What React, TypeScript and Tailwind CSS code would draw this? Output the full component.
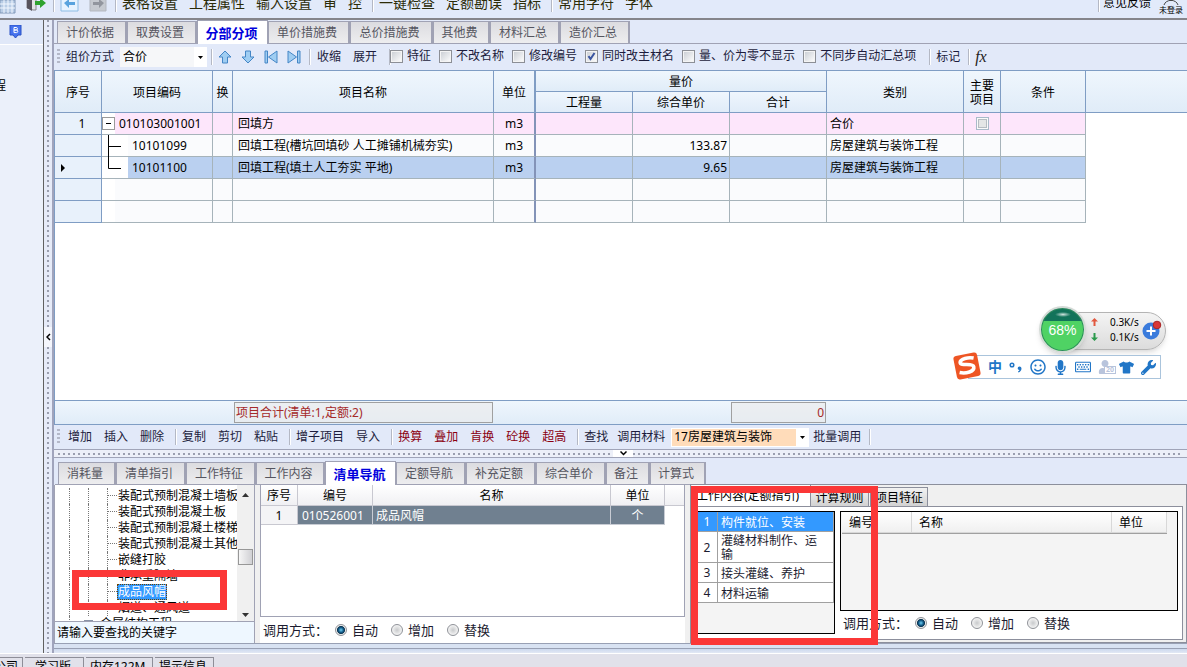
import React from 'react'
import clsx from 'clsx'
import { FaMicrophone, FaRegKeyboard, FaRegSmile, FaTshirt, FaUser, FaWrench } from 'react-icons/fa'

const topMenus = [
    ['表格设置', '工程属性', '输入设置', '审', '控'],
    ['一键检查', '定额勘误', '指标'],
    ['常用字符', '字体'],
]

const mainTabs = [
    { name: '计价依据', width: 'w-[70px]' },
    { name: '取费设置', width: 'w-[70px]' },
    { name: '分部分项', width: 'w-[71px]' },
    { name: '单价措施费', width: 'w-[82px]' },
    { name: '总价措施费', width: 'w-[83px]' },
    { name: '其他费', width: 'w-[57px]' },
    { name: '材料汇总', width: 'w-[70px]' },
    { name: '造价汇总', width: 'w-[70px]' },
]

const detailTabs = [
    { name: '消耗量', width: 'w-[58px]' },
    { name: '清单指引', width: 'w-[70px]' },
    { name: '工作特征', width: 'w-[70px]' },
    { name: '工作内容', width: 'w-[69px]' },
    { name: '清单导航', width: 'w-[71px]' },
    { name: '定额导航', width: 'w-[70px]' },
    { name: '补充定额', width: 'w-[70px]' },
    { name: '综合单价', width: 'w-[70px]' },
    { name: '备注', width: 'w-[44px]' },
    { name: '计算式', width: 'w-[56px]' },
]

const checks = [
    { label: '特征', checked: false },
    { label: '不改名称', checked: false },
    { label: '修改编号', checked: false },
    { label: '同时改主材名', checked: true },
    { label: '量、价为零不显示', checked: false },
    { label: '不同步自动汇总项', checked: false },
]

const editGroups = [
    { items: ['增加', '插入', '删除'], color: 'text-[#1c1c3c]' },
    { items: ['复制', '剪切', '粘贴'], color: 'text-[#1c1c3c]' },
    { items: ['增子项目', '导入'], color: 'text-[#1c1c3c]' },
    { items: ['换算', '叠加', '肯换', '砼换', '超高'], color: 'text-[#8b0010]' },
    { items: ['查找', '调用材料'], color: 'text-[#1c1c3c]' },
]

interface QuotaRow {
    no?: string
    code?: string
    name?: string
    unit?: string
    price?: string
    category?: string
    kind: 'parent' | 'child' | 'last' | 'empty'
}

const quotaRows: QuotaRow[] = [
    { no: '1', code: '010103001001', name: '回填方', unit: 'm3', category: '合价', kind: 'parent' },
    { code: '10101099', name: '回填工程(槽坑回填砂 人工摊铺机械夯实)', unit: 'm3', price: '133.87', category: '房屋建筑与装饰工程', kind: 'child' },
    { code: '10101100', name: '回填工程(填土人工夯实 平地)', unit: 'm3', price: '9.65', category: '房屋建筑与装饰工程', kind: 'last' },
    { kind: 'empty' },
    { kind: 'empty' },
]

const treeItems = [
    '装配式预制混凝土墙板',
    '装配式预制混凝土板',
    '装配式预制混凝土楼梯',
    '装配式预制混凝土其他',
    '嵌缝打胶',
    '非承重隔墙',
    '成品风帽',
    '烟道、通风道',
]

const workItems = ['构件就位、安装', '灌缝材料制作、运输', '接头灌缝、养护', '材料运输']

function Separator({ className }: { className?: string }) {
    return <span className={clsx('h-4 w-px shrink-0 bg-[#b4b8c4] shadow-[1px_0_0_#ffffff]', className)} />
}

function Grip() {
    return <span className="h-4 w-[3px] shrink-0 bg-[repeating-linear-gradient(180deg,#b4b8c8_0px,#b4b8c8_2px,transparent_2px,transparent_4px)]" />
}

interface TabsProps {
    tabs: { name: string; width: string }[]
    active: string
    onChange: (name: string) => void
}

function Tabs({ tabs, active, onChange }: TabsProps) {
    return (
        <div role="tablist" className="flex h-6 shrink-0 items-end border-b border-[#a0a2b4] pl-[3px]">
            {tabs.map((tab) => (
                <button
                    key={tab.name}
                    type="button"
                    role="tab"
                    aria-selected={tab.name === active}
                    onClick={() => onChange(tab.name)}
                    className={clsx(
                        'shrink-0 whitespace-nowrap border border-b-0 border-[#a0a2b4] text-center',
                        tab.width,
                        tab.name === active
                            ? '-mb-px h-6 bg-white pr-[2px] text-[13px] leading-5 font-bold text-[#0000dd]'
                            : 'h-[22px] border-r-2 bg-linear-to-b from-[#dcdce0] to-[#ededef] pr-[3px] text-xs leading-[22px] text-[#55555f]',
                    )}
                >
                    {tab.name}
                </button>
            ))}
        </div>
    )
}

function Check({ label, defaultChecked }: { label: string; defaultChecked: boolean }) {
    return (
        <label className="flex shrink-0 items-center gap-1 whitespace-nowrap">
            <span className="relative size-[13px]">
                <input
                    type="checkbox"
                    defaultChecked={defaultChecked}
                    className="peer block size-[13px] appearance-none border border-[#8c8f96] bg-linear-to-br from-[#c8ccd2] to-white shadow-[inset_0_0_0_1px_#f4f4f4]"
                />
                <svg viewBox="0 0 13 13" className="pointer-events-none absolute inset-0 hidden peer-checked:block">
                    <path d="M3.5 6.2 5.5 9 9.5 3" fill="none" stroke="#3a55a0" strokeWidth="2" />
                </svg>
            </span>
            {label}
        </label>
    )
}

function CallMode({ name }: { name: string }) {
    return (
        <div role="radiogroup" aria-label="调用方式" className="flex items-center text-[13px] leading-4 text-[#1c1c30]">
            <span className="w-[72px] whitespace-nowrap">调用方式：</span>
            {['自动', '增加', '替换'].map((mode, i) => (
                <label key={mode} className="flex w-14 items-center gap-[5px] whitespace-nowrap">
                    <input
                        type="radio"
                        name={name}
                        defaultChecked={i === 0}
                        className="size-3 appearance-none rounded-full border border-[#8f9298] bg-[radial-gradient(circle,#c8cacc_0%,#f4f4f4_70%)] checked:bg-[radial-gradient(circle,#6fd0f4_0%,#125a88_35%,#0d3550_52%,#eeeeee_62%)]"
                    />
                    {mode}
                </label>
            ))}
        </div>
    )
}

function ArrowIcon({ path, name }: { path: string; name: string }) {
    return (
        <button type="button" aria-label={name} className="shrink-0">
            <svg width="14" height="14" viewBox="0 0 14 14">
                <path d={path} fill="#9fcdf2" stroke="#4486c6" strokeWidth="1" strokeLinejoin="round" />
            </svg>
        </button>
    )
}

function TopBar() {
    return (
        <header className="flex h-5 shrink-0 items-end border-b-2 border-[#85858b] bg-[#e2eafa] pb-[7px] text-sm leading-4 text-[#2c2c08]">
            <svg width="16" height="14" viewBox="0 0 16 14" className="-mb-[3px] shrink-0">
                <path d="M0 0h15v13H0z" fill="#b9cde6" stroke="#8097b8" />
                <path d="M0 4h15M0 8h15M4 0v13M8 0v13M12 0v13" stroke="#f2f7ff" />
            </svg>
            <svg width="20" height="14" viewBox="0 0 20 14" className="-mb-px ml-[10px] shrink-0">
                <path d="M1 0h9v12H7l-6-2z" fill="#e3e3e6" stroke="#85838a" />
                <path d="M1 0h5v13l-5-3z" fill="#57535c" />
                <path d="M9 3h5V0l6 5-6 5V7H9z" fill="#2fa32f" />
            </svg>
            <Separator className="-mb-px ml-[7px]" />
            <svg width="20" height="14" viewBox="0 0 20 14" className="-mb-[2px] ml-[6px] shrink-0">
                <path d="M1 0v12h17V0" fill="#e6f3ff" stroke="#8dbce4" />
                <path d="M4 4 9 0v3h6v3H9v3z" fill="#58a3de" />
            </svg>
            <svg width="18" height="14" viewBox="0 0 18 14" className="-mb-[2px] ml-[9px] shrink-0">
                <path d="M1 0v12h16V0" fill="#c6cad0" stroke="#b3b7bf" />
                <path d="M15 4 10 0v3H4v3h6v3z" fill="#92969e" />
            </svg>
            {topMenus.map((group, i) => (
                <React.Fragment key={i}>
                    <Separator className={i === 0 ? '-mb-px ml-[8px]' : '-mb-px ml-[10px]'} />
                    <nav className="ml-[6px] flex shrink-0 gap-[11px] whitespace-nowrap">
                        {group.map((item) => (
                            <button key={item} type="button">
                                {item}
                            </button>
                        ))}
                    </nav>
                </React.Fragment>
            ))}
            <Separator className="-mb-px ml-auto" />
            <button type="button" className="ml-1 shrink-0 text-xs leading-4 text-black">
                意见反馈
            </button>
            <button type="button" className="ml-2 mr-1 -mb-1 flex shrink-0 flex-col items-center text-[8px] leading-[10px] text-black">
                <svg width="16" height="8" viewBox="0 0 16 8">
                    <path d="M1 8c1-3 3-4 7-5 4 1 6 2 7 5M6 2l2 2 2-2" fill="none" stroke="#444" />
                </svg>
                未登录
            </button>
        </header>
    )
}

function MainToolbar() {
    return (
        <div className="flex h-[26px] shrink-0 items-center bg-[#e2e9f9] pl-[3px] text-xs leading-4 text-[#1c1c3c]">
            <Grip />
            <label htmlFor="pricing" className="ml-[6px] shrink-0">
                组价方式
            </label>
            <div className="relative ml-[6px] h-5 w-[87px] shrink-0">
                <select id="pricing" className="h-5 w-full appearance-none bg-[#f6f7f9] pl-[3px] text-black">
                    <option>合价</option>
                </select>
                <span className="pointer-events-none absolute inset-y-0 right-0 flex w-[13px] items-center justify-center bg-white">
                    <svg width="5" height="3" viewBox="0 0 5 3">
                        <path d="M0 0h5L2.500 3z" />
                    </svg>
                </span>
            </div>
            <Separator className="ml-1" />
            <div className="ml-[6px] flex shrink-0 gap-[9px]">
                <ArrowIcon name="上移" path="M7 1l6 6H9.500v6h-5V7H1z" />
                <ArrowIcon name="下移" path="M4.500 1h5v6H13l-6 6-6-6h3.500z" />
                <ArrowIcon name="首项" path="M1 1h2.500v12H1zM13 1v12L4.500 7z" />
                <ArrowIcon name="末项" path="M10.500 1H13v12h-2.500zM1 1v12l8.500-6z" />
            </div>
            <Separator className="ml-[8px]" />
            <div className="ml-[7px] flex shrink-0 gap-3">
                <button type="button">收缩</button>
                <button type="button">展开</button>
            </div>
            <Separator className="ml-3" />
            <div className="flex shrink-0 gap-2 pb-[2px]">
                {checks.map((item) => (
                    <Check key={item.label} label={item.label} defaultChecked={item.checked} />
                ))}
            </div>
            <Separator className="ml-[13px]" />
            <button type="button" className="ml-[6px] shrink-0">
                标记
            </button>
            <Separator className="ml-[8px]" />
            <button type="button" aria-label="函数" className="ml-[6px] shrink-0">
                <span className="pr-1 font-['Liberation_Serif',serif] text-base font-medium text-[#222222] italic">fx</span>
            </button>
        </div>
    )
}

const headCell = 'border-b border-r border-[#7f9dc4] bg-linear-to-b from-[#eff6fd] to-[#e0ecf8] p-0 pt-[2px] font-normal'
const bodyCell = 'border-b border-r border-[#a6b3ba] p-0'

function QuotaTable() {
    return (
        <table className="w-full table-fixed border-separate border-spacing-0 text-xs leading-[14px] text-black">
            <colgroup>
                <col className="w-[47px]" />
                <col className="w-[111px]" />
                <col className="w-[20px]" />
                <col className="w-[261px]" />
                <col className="w-[42px]" />
                <col className="w-[97px]" />
                <col className="w-[97px]" />
                <col className="w-[97px]" />
                <col className="w-[137px]" />
                <col className="w-[37px]" />
                <col className="w-[85px]" />
                <col />
            </colgroup>
            <thead>
                <tr className="h-[21px]">
                    <th rowSpan={2} className={headCell}>序号</th>
                    <th rowSpan={2} className={headCell}>项目编码</th>
                    <th rowSpan={2} className={headCell}>换</th>
                    <th rowSpan={2} className={headCell}>项目名称</th>
                    <th rowSpan={2} className={clsx(headCell, 'border-r-2')}>单位</th>
                    <th colSpan={3} className={headCell}>量价</th>
                    <th rowSpan={2} className={headCell}>类别</th>
                    <th rowSpan={2} className={clsx(headCell, 'px-[6px]')}>主要项目</th>
                    <th rowSpan={2} className={headCell}>条件</th>
                    <td rowSpan={2} className={clsx(headCell, 'border-r-0')} />
                </tr>
                <tr className="h-[21px]">
                    <th className={headCell}>工程量</th>
                    <th className={headCell}>综合单价</th>
                    <th className={headCell}>合计</th>
                </tr>
            </thead>
            <tbody>
                {quotaRows.map((row, i) => {
                    const fill = row.kind === 'parent' ? 'bg-[#fde6fb]' : row.kind === 'last' ? 'bg-[#bad0f0]' : 'bg-[#fafbfd]'
                    const cell = clsx(bodyCell, fill)
                    return (
                        <tr key={i} className="h-[22px]">
                            <td className="border-b border-r border-[#7f9dc4] bg-[#e8f1fb] p-0">
                                <div className="flex items-center justify-center pl-[6px]">
                                    {row.no && <span className="pl-[2px]">{row.no}</span>}
                                    {row.kind === 'last' && (
                                        <svg width="4" height="8" viewBox="0 0 4 8" className="mr-auto">
                                            <path d="M0 0l4 4-4 4z" />
                                        </svg>
                                    )}
                                </div>
                            </td>
                            <td className={clsx(bodyCell, 'bg-white')}>
                                <div className="flex h-[21px] items-center">
                                    {row.kind === 'parent' && (
                                        <button type="button" aria-label="折叠" className="flex size-[13px] shrink-0 items-center justify-center border border-[#9a9a9a] bg-white">
                                            <span className="h-px w-[5px] bg-black" />
                                        </button>
                                    )}
                                    {(row.kind === 'child' || row.kind === 'last') && (
                                        <svg width="26" height="22" viewBox="0 0 26 22" className="-my-px shrink-0">
                                            <path d={row.kind === 'child' ? 'M6.500 0v22M7 11.500h12' : 'M6.500 0v11.500h12.500'} fill="none" stroke="#000" />
                                        </svg>
                                    )}
                                    {row.kind === 'empty' && <span className="w-[13px] shrink-0" />}
                                    <span className={clsx('flex h-full grow items-center pl-1', fill)}>{row.code}</span>
                                </div>
                            </td>
                            <td className={cell} />
                            <td className={clsx(cell, 'whitespace-nowrap pl-[5px]')}>{row.name}</td>
                            <td className={clsx(cell, 'border-r-2 border-r-[#8393b8] text-center')}>{row.unit}</td>
                            <td className={cell} />
                            <td className={clsx(cell, 'pr-[2px] text-right')}>{row.price}</td>
                            <td className={cell} />
                            <td className={clsx(cell, 'whitespace-nowrap pl-[3px]')}>{row.category}</td>
                            <td className={cell}>
                                {row.kind === 'parent' && (
                                    <input
                                        type="checkbox"
                                        aria-label="主要项目"
                                        className="mx-auto block size-[13px] appearance-none border border-[#a9bac9] bg-[#e4e6e6] shadow-[inset_0_0_0_1px_#fafafa,inset_0_0_0_2px_#b6bcc2]"
                                    />
                                )}
                            </td>
                            <td className={cell} />
                            <td className="p-0" />
                        </tr>
                    )
                })}
            </tbody>
        </table>
    )
}

function SpeedBall() {
    return (
        <div className="absolute right-[21px] top-[235px] flex h-[47px] w-[127px] items-center">
            <div className="absolute right-0 left-2 top-[6px] h-[38px] rounded-full border border-[#b4b4b4] bg-linear-to-b from-[#f4f4f4] to-[#dcdcdc] shadow-md" />
            <div className="relative flex size-[47px] shrink-0 items-center justify-center rounded-full border-2 border-[#d4dad6] bg-linear-to-b from-[#12735a] from-30% to-[#4fd264] to-31% font-['Liberation_Sans',sans-serif] text-sm text-white shadow-md ring-1 ring-[#2d8a5c] ring-inset">
                <span className="absolute top-1 h-[5px] w-4 rounded-full bg-radial from-white/80 to-transparent to-70%" />
                68%
            </div>
            <div className="relative ml-[5px] flex flex-col text-[10px] leading-[15px] text-black">
                <span className="flex items-center gap-3">
                    <svg width="7" height="8" viewBox="0 0 7 8">
                        <path d="M3.500 0 7 3.500H4.500V8h-2V3.500H0z" fill="#e2583f" />
                    </svg>
                    0.3K/s
                </span>
                <span className="flex items-center gap-3">
                    <svg width="7" height="8" viewBox="0 0 7 8">
                        <path d="M3.500 8 7 4.500H4.500V0h-2v4.500H0z" fill="#2a9a4c" />
                    </svg>
                    0.1K/s
                </span>
            </div>
            <svg width="20" height="20" viewBox="0 0 20 20" className="relative ml-[3px] shrink-0">
                <circle cx="9" cy="11" r="8.500" fill="#3a7bdc" />
                <path d="M9 6.500v9M4.500 11h9" stroke="#fff" strokeWidth="2" />
                <circle cx="15" cy="5" r="3.800" fill="#d93636" stroke="#a82424" />
            </svg>
        </div>
    )
}

function ImeBar() {
    return (
        <div className="absolute right-[26px] top-[284px] flex h-6 items-center gap-[7px] border border-[#aac4dc] bg-white pl-[19px] pr-1 text-[#2176c7]">
            <svg width="30" height="30" viewBox="0 0 30 30" className="absolute -left-[17px] -top-[5px]">
                <g transform="rotate(-11 15 15)">
                    <rect x="3" y="3" width="24" height="24" rx="3" fill="#ee5524" />
                    <path d="M23 8.500c-5-2-13-2-14 1.500-1 4.500 12.500 2.500 12.500 7 0 5-9 5.500-15 3" fill="none" stroke="#fff" strokeWidth="3.600" />
                </g>
            </svg>
            <span className="text-sm leading-4 font-bold">中</span>
            <svg width="14" height="14" viewBox="0 0 14 14">
                <circle cx="3" cy="5" r="1.800" fill="none" stroke="currentColor" strokeWidth="1.500" />
                <path d="M10.500 6.500a2 2 0 0 1 2 2c0 2-1.500 3.500-3 4l-.5-1c1-.4 1.400-.9 1.400-1.400a1.800 1.800 0 0 1 .1-3.600z" fill="currentColor" />
            </svg>
            <FaRegSmile size={16} />
            <FaMicrophone size={15} />
            <FaRegKeyboard size={16} />
            <span className="relative text-[#b8c4dc]">
                <FaUser size={14} />
                <span className="absolute left-[6px] top-[6px] border border-current bg-white px-px text-[7px] leading-[6px] font-bold">20</span>
            </span>
            <FaTshirt size={15} />
            <FaWrench size={15} />
        </div>
    )
}

function EditToolbar() {
    return (
        <div className="flex h-6 shrink-0 items-center bg-[#e2e9f9] pl-[3px] text-xs leading-4">
            <Grip />
            <span className="w-[2px]" />
            {editGroups.map((group, i) => (
                <React.Fragment key={i}>
                    {i > 0 && <Separator className="ml-[5px]" />}
                    {group.items.map((item) => (
                        <button key={item} type="button" className={clsx('shrink-0 whitespace-nowrap px-[6px]', group.color, item === '查找' && 'pr-[3px]')}>
                            {item}
                        </button>
                    ))}
                </React.Fragment>
            ))}
            <div className="relative h-[19px] w-[138px] shrink-0">
                <select aria-label="定额库" className="h-[19px] w-full appearance-none border border-white bg-[#ffdcba] pl-[2px] text-black">
                    <option>17房屋建筑与装饰</option>
                </select>
                <span className="pointer-events-none absolute inset-y-0 right-0 flex w-[13px] items-center justify-center bg-white">
                    <svg width="5" height="3" viewBox="0 0 5 3">
                        <path d="M0 0h5L2.500 3z" />
                    </svg>
                </span>
            </div>
            <button type="button" className="ml-1 shrink-0 text-[#1c1c3c]">
                批量调用
            </button>
            <Separator className="ml-[8px]" />
        </div>
    )
}

function ListTree() {
    const [keyword, setKeyword] = React.useState('')

    return (
        <div className="relative flex w-[201px] shrink-0 flex-col border-r border-l border-[#a0a2b4] text-xs text-black">
            <div className="flex h-[136px] overflow-hidden bg-white">
                <ul className="grow overflow-hidden whitespace-nowrap pt-[3px]">
                    {treeItems.map((item) => (
                        <li key={item} className="flex h-4 pl-[14px] leading-4">
                            <span className="w-[19px] shrink-0 border-l border-dotted border-[#777777]" />
                            <span className="w-[19px] shrink-0 border-l border-dotted border-[#777777]" />
                            <span className="w-[10px] shrink-0 border-l border-dotted border-[#777777]">
                                <span className="block h-2 border-b border-dotted border-[#777777]" />
                            </span>
                            <span
                                className={clsx(
                                    'px-px',
                                    item === '成品风帽' && 'bg-[#3399ff] text-white outline-1 -outline-offset-1 outline-dotted outline-[#6b4200]',
                                )}
                            >
                                {item}
                            </span>
                        </li>
                    ))}
                    <li className="flex h-4 items-center pl-[14px] leading-4">
                        <span className="h-4 w-[15px] shrink-0 border-l border-dotted border-[#777777]" />
                        <span className="flex size-[9px] items-center justify-center border border-[#8a94a8] text-[9px] leading-none">+</span>
                        <span className="ml-[7px]">金属结构工程</span>
                    </li>
                </ul>
                <div className="flex w-[17px] shrink-0 flex-col items-center bg-[#f0f0f0]">
                    <svg width="7" height="4" viewBox="0 0 7 4" className="mt-2">
                        <path d="M3.500 0 7 4H0z" fill="#333" />
                    </svg>
                    <div className="mt-[52px] h-4 w-[15px] border border-[#979797] bg-linear-to-r from-[#f6f6f6] to-[#d0d0d4]" />
                    <svg width="7" height="4" viewBox="0 0 7 4" className="mt-auto mb-1">
                        <path d="M0 0h7L3.500 4z" fill="#333" />
                    </svg>
                </div>
            </div>
            <input
                type="text"
                aria-label="查找关键字"
                placeholder="请输入要查找的关键字"
                value={keyword}
                onChange={(e) => setKeyword(e.target.value)}
                className="h-[22px] w-full border-t border-[#a0a2b4] bg-[#eef7ff] pl-[2px] text-xs leading-4 outline-none placeholder:text-black"
            />
            <div className="pointer-events-none absolute left-[17px] top-[85px] h-10 w-[155px] border-[7px] border-[#fb3737]" />
        </div>
    )
}

function ItemPanel() {
    const th = 'border-b border-r border-[#c8c8d0] bg-linear-to-b from-white to-[#f0f0f3] p-0 pt-px font-normal'
    const td = 'border-b border-r border-[#c8ccd4] bg-[#708090] p-0 pt-px text-white'

    return (
        <div className="ml-[5px] flex w-[425px] shrink-0 flex-col bg-white">
            <div className="h-[132px] border border-t-0 border-[#a0a2b4]">
                <table className="w-full table-fixed border-separate border-spacing-0 text-xs leading-4 text-black">
                    <colgroup>
                        <col className="w-[37px]" />
                        <col className="w-[75px]" />
                        <col className="w-[238px]" />
                        <col className="w-[54px]" />
                        <col />
                    </colgroup>
                    <thead>
                        <tr className="h-[21px]">
                            <th className={th}>序号</th>
                            <th className={th}>编号</th>
                            <th className={th}>名称</th>
                            <th className={th}>单位</th>
                            <td className={clsx(th, 'border-r-0')} />
                        </tr>
                    </thead>
                    <tbody>
                        <tr className="h-[19px]">
                            <td className="border-b border-r border-[#c8c8d0] bg-[#f4f4f6] p-0 pt-px text-center">1</td>
                            <td className={clsx(td, 'pl-1')}>010526001</td>
                            <td className={clsx(td, 'pl-[3px]')}>成品风帽</td>
                            <td className={clsx(td, 'text-center')}>个</td>
                            <td className="p-0" />
                        </tr>
                    </tbody>
                </table>
            </div>
            <div className="flex grow items-center pl-[3px]">
                <CallMode name="item-mode" />
            </div>
        </div>
    )
}

function WorkPanel() {
    const ruleTab = 'h-[19px] border border-b-0 border-[#8c8f9c] bg-linear-to-b from-[#f2f2f2] to-[#d2d2d2] px-1 text-center leading-5'
    const th = 'border-b border-r border-[#d8d8d8] bg-linear-to-b from-white to-[#f0f0f0] p-0 pt-[2px] pl-[7px] text-left font-normal'

    return (
        <div className="relative -mt-px ml-[5px] flex min-w-[440px] grow flex-col border border-[#8c8f9c] bg-[#f0f0f0] pr-[3px] pb-[2px] pl-px text-xs text-black">
            <div role="tablist" className="flex h-[21px] shrink-0 items-end whitespace-nowrap">
                <button type="button" role="tab" aria-selected="true" className="h-[21px] w-[119px] border-r border-[#8c8f9c] bg-white pl-1 text-left leading-[22px]">
                    工作内容(定额指引)
                </button>
                <button type="button" role="tab" aria-selected="false" className={clsx(ruleTab, 'w-[58px] border-l-0')}>
                    计算规则
                </button>
                <button type="button" role="tab" aria-selected="false" className={clsx(ruleTab, 'ml-px w-[58px]')}>
                    项目特征
                </button>
            </div>
            <div className="flex grow border-r border-b border-t border-[#8c8f9c] bg-white pt-1 pr-1 pl-1">
                <div className="mb-[5px] w-[139px] shrink-0 border border-black bg-[#f4f4f4]">
                    <table className="w-full table-fixed border-separate border-spacing-0 leading-[14px]">
                        <colgroup>
                            <col className="w-[21px]" />
                            <col />
                        </colgroup>
                        <tbody>
                            {workItems.map((item, i) => (
                                <tr key={item} className={clsx('h-[20px]', i === 0 ? 'bg-[#3399ff] text-white' : 'bg-white text-[#1c1c30]')}>
                                    <td className="border-b border-r border-[#a0a0a0] p-0 pt-px text-center">{i + 1}</td>
                                    <td className="border-b border-r border-[#a0a0a0] pt-[2px] pr-[8px] pl-[3px]">{item}</td>
                                </tr>
                            ))}
                        </tbody>
                    </table>
                </div>
                <div className="ml-[5px] flex grow flex-col">
                    <div className="h-[100px] border border-black bg-[#f4f4f4] pr-[10px] pl-px">
                        <table className="w-full table-fixed border-separate border-spacing-0 border-b border-[#a0a0a0] leading-4">
                            <thead>
                                <tr className="h-[21px]">
                                    <th className={clsx(th, 'w-[70px]')}>编号</th>
                                    <th className={th}>名称</th>
                                    <th className={clsx(th, 'w-[55px]')}>单位</th>
                                </tr>
                            </thead>
                        </table>
                    </div>
                    <div className="pt-1 pl-[3px]">
                        <CallMode name="work-mode" />
                    </div>
                </div>
            </div>
            <div className="pointer-events-none absolute left-0 top-px h-[159px] w-[187px] border-[7px] border-[#fb3737]" />
        </div>
    )
}

function StatusBar() {
    return (
        <footer className="flex h-[14px] shrink-0 gap-[2px] overflow-hidden border-t border-white bg-[#e1e1ea] pt-[3px] text-xs leading-[18px] whitespace-nowrap text-black">
            <div className="flex h-5 w-[23px] shrink-0 justify-end border-t border-r border-[#8e8e98] pr-1">公司</div>
            <div className="h-5 w-[59px] shrink-0 border-t border-r border-[#8e8e98] pl-[10px]">学习版</div>
            <div className="h-5 w-[67px] shrink-0 border-t border-r border-[#8e8e98] pl-[4px]">内存122M</div>
            <div className="h-5 w-[59px] shrink-0 border-t border-r border-[#8e8e98] pl-[4px]">提示信息</div>
        </footer>
    )
}

export default function App() {
    const [mainTab, setMainTab] = React.useState('分部分项')
    const [detailTab, setDetailTab] = React.useState('清单导航')

    return (
        <div className="flex h-screen flex-col overflow-hidden bg-[#e2e9f9] font-['Noto_Sans','Noto_Sans_CJK_SC',sans-serif] text-xs">
            <TopBar />
            <div className="flex min-h-0 grow">
                <aside className="flex w-11 shrink-0 flex-col border-r border-[#606060] bg-[#ebf0fa]">
                    <div className="flex h-[25px] items-center border-b border-white bg-[#e0e8f8] pl-[9px]">
                        <svg width="13" height="14" viewBox="0 0 13 14">
                            <path d="M1 0h11v10H9l-2.500 3L4 10H1z" fill="#4673ee" stroke="#2b52c4" />
                            <path d="M5 2.500h2.200a1.200 1.200 0 0 1 0 2.500H5zM5 5h2.500a1.300 1.300 0 0 1 0 2.600H5z" fill="none" stroke="#fff" />
                        </svg>
                    </div>
                    <div className="mt-[33px] flex w-[6px] justify-end leading-4 text-black">
                        <span>程</span>
                    </div>
                </aside>
                <div className="flex w-[10px] shrink-0 flex-col items-center border-r-2 border-[#a0a4bc] bg-[#e6ebf8]">
                    <span className="w-[2px] grow bg-[repeating-linear-gradient(180deg,#9a9eae_0px,#9a9eae_2px,transparent_2px,transparent_5px)]" />
                    <button type="button" aria-label="收起" className="flex h-5 w-full items-center justify-center bg-[#f4f6fc]">
                        <svg width="5" height="8" viewBox="0 0 5 8">
                            <path d="M4 1 1 4l3 3" fill="none" stroke="#000" strokeWidth="1.500" />
                        </svg>
                    </button>
                    <span className="w-[2px] grow bg-[repeating-linear-gradient(180deg,#9a9eae_0px,#9a9eae_2px,transparent_2px,transparent_5px)]" />
                </div>
                <main className="flex min-w-0 grow flex-col">
                    <Tabs tabs={mainTabs} active={mainTab} onChange={setMainTab} />
                    <MainToolbar />
                    <section className="relative min-h-0 grow border-t border-l border-[#7f9dc4] bg-white">
                        <QuotaTable />
                        <SpeedBall />
                        <ImeBar />
                    </section>
                    <div className="flex h-[25px] shrink-0 items-center border-y border-l border-[#7f9dc4] bg-linear-to-b from-[#eff6fd] to-[#e0ecf8] pl-[179px] text-[#a52a2a]">
                        <div className="h-[21px] w-[259px] shrink-0 border border-[#a0a0a0] bg-[#ebebeb]/60 pl-px leading-5">项目合计(清单:1,定额:2)</div>
                        <div className="ml-[238px] h-[21px] w-[95px] shrink-0 border border-[#a0a0a0] bg-[#ebebeb]/60 pr-px text-right leading-5">0</div>
                    </div>
                    <EditToolbar />
                    <div className="flex h-[9px] shrink-0 items-center border-y border-[#a0a4b8] bg-[#eceff8] px-1">
                        <span className="h-[2px] w-[555px] bg-[repeating-linear-gradient(90deg,#9a9eae_0px,#9a9eae_2px,transparent_2px,transparent_5px)]" />
                        <button type="button" aria-label="收起下方面板" className="flex h-[7px] w-5 items-center justify-center bg-white">
                            <svg width="7" height="5" viewBox="0 0 7 5">
                                <path d="M0.500 0.500l3 3 3-3" fill="none" stroke="#000" strokeWidth="1.500" />
                            </svg>
                        </button>
                        <span className="h-[2px] grow bg-[repeating-linear-gradient(90deg,#9a9eae_0px,#9a9eae_2px,transparent_2px,transparent_5px)]" />
                    </div>
                    <div className="flex shrink-0 flex-col pt-[3px]">
                        <div className="pl-px">
                            <Tabs tabs={detailTabs} active={detailTab} onChange={setDetailTab} />
                        </div>
                        <div className="flex h-[158px] bg-[#f0f0f0]">
                            <ListTree />
                            <ItemPanel />
                            <WorkPanel />
                        </div>
                    </div>
                    <div className="h-[6px] shrink-0 border-y border-[#98a0b4] bg-[#d8e2f2]" />
                    <div className="h-1 shrink-0 bg-linear-to-b from-[#cdd9ee] to-[#e2e8f4]" />
                </main>
            </div>
            <StatusBar />
        </div>
    )
}
